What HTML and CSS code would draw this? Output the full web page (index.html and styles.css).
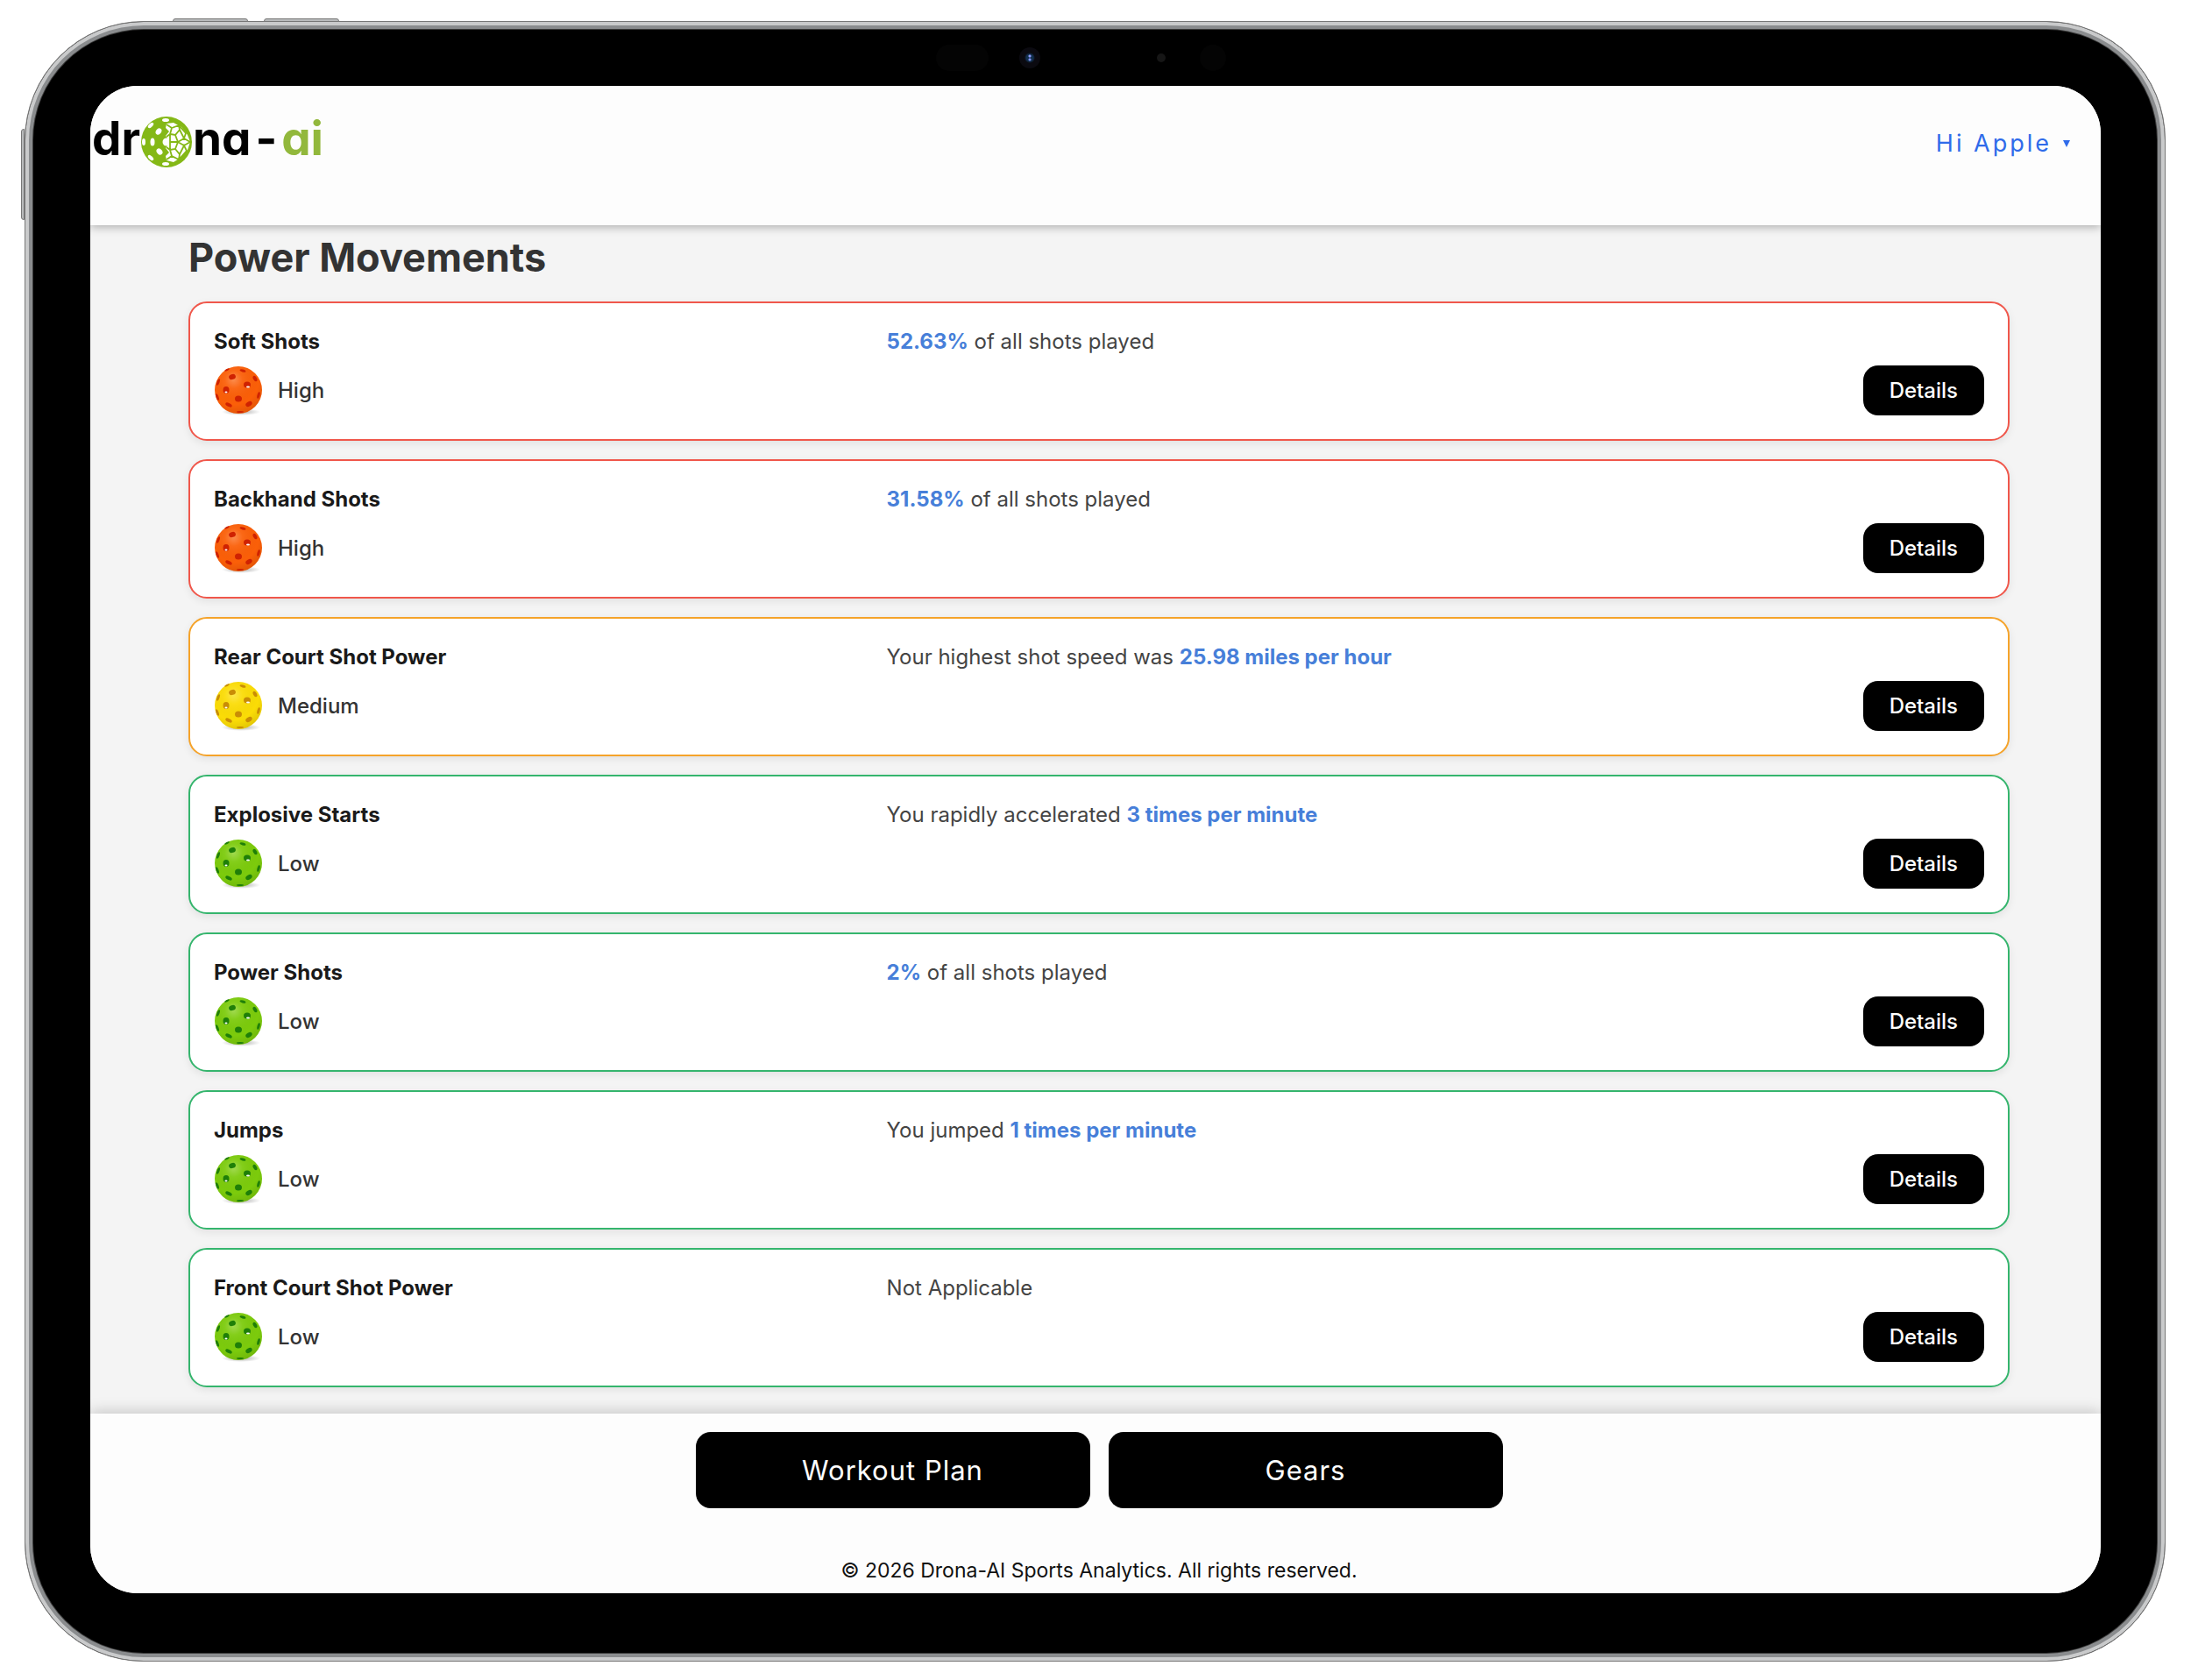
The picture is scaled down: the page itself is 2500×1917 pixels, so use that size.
FILE: index.html
```html
<!DOCTYPE html>
<html lang="en">
<head>
    <meta charset="UTF-8">
    <meta name="viewport" content="width=device-width, initial-scale=1.0">
    <title>Drona-AI | Power Movements</title>
    <link rel="stylesheet" href="styles.css">
</head>
<body>
    <!-- Shared ball drawing, coloured by the level class of each card -->
    <svg class="sprite" aria-hidden="true">
        <defs>
            <radialGradient id="shine" cx="0.4" cy="0.28" r="0.75">
                <stop offset="0" stop-color="#fff" stop-opacity="0.28"/>
                <stop offset="0.25" stop-color="#fff" stop-opacity="0.06"/>
                <stop offset="0.7" stop-color="#000" stop-opacity="0"/>
                <stop offset="1" stop-color="#000" stop-opacity="0.1"/>
            </radialGradient>
            <radialGradient id="ground">
                <stop offset="0" stop-color="#777" stop-opacity="0.6"/>
                <stop offset="1" stop-color="#777" stop-opacity="0"/>
            </radialGradient>
            <symbol id="ball" viewBox="0 0 56 56">
                <ellipse cx="31" cy="52" rx="22" ry="4" fill="url(#ground)"/>
                <circle class="ball-body" cx="28" cy="27" r="27"/>
                <circle cx="28" cy="27" r="27" fill="url(#shine)"/>
                <g class="ball-holes">
                    <ellipse cx="21" cy="12" rx="4" ry="3" transform="rotate(-20 21 12)"/>
                    <ellipse cx="33" cy="5" rx="3.5" ry="1.5" transform="rotate(15 33 5)"/>
                    <ellipse cx="15" cy="4" rx="3" ry="1" transform="rotate(-25 15 4)"/>
                    <ellipse cx="47" cy="14" rx="2" ry="3.5" transform="rotate(-30 47 14)"/>
                    <ellipse cx="38" cy="21" rx="4" ry="3.5"/>
                    <ellipse cx="14" cy="27" rx="3.5" ry="4"/>
                    <ellipse cx="5" cy="18" rx="1.5" ry="4" transform="rotate(20 5 18)"/>
                    <ellipse cx="28" cy="37" rx="4" ry="3.5"/>
                    <ellipse cx="4" cy="35" rx="1.5" ry="4" transform="rotate(-20 4 35)"/>
                    <ellipse cx="17" cy="44" rx="4" ry="2" transform="rotate(25 17 44)"/>
                    <ellipse cx="40" cy="43" rx="4" ry="2.5" transform="rotate(-30 40 43)"/>
                    <ellipse cx="51" cy="33" rx="1.5" ry="4" transform="rotate(15 51 33)"/>
                    <ellipse cx="30" cy="52" rx="4" ry="1"/>
                </g>
                <g fill="#fff">
                    <ellipse cx="39" cy="23.5" rx="2" ry="1"/>
                    <ellipse cx="14" cy="29.5" rx="1.5" ry="1"/>
                </g>
            </symbol>
        </defs>
    </svg>

    <div class="tablet">
        <span class="side-button volume-up"></span>
        <span class="side-button volume-down"></span>
        <span class="side-button power"></span>
        <div class="sensors">
            <span class="sensor-pill"></span>
            <span class="camera"></span>
            <span class="mic"></span>
            <span class="sensor-dot"></span>
        </div>

        <div class="screen">
            <header class="header">
                <a class="logo" href="#" aria-label="drona-ai">
                    <span>dr</span>
                    <svg class="logo-ball" viewBox="0 0 60 60" aria-hidden="true">
                        <circle cx="30" cy="30" r="29" fill="#84b816"/>
                        <g fill="#fff">
                            <ellipse cx="29" cy="5" rx="4" ry="2"/>
                            <ellipse cx="12" cy="11" rx="4" ry="2" transform="rotate(-45 12 11)"/>
                            <ellipse cx="21" cy="18" rx="4" ry="3" transform="rotate(-55 21 18)"/>
                            <ellipse cx="4" cy="30" rx="2" ry="4"/>
                            <ellipse cx="14" cy="30" rx="2.5" ry="4.5"/>
                            <ellipse cx="22" cy="41" rx="4" ry="3" transform="rotate(50 22 41)"/>
                            <ellipse cx="12" cy="48" rx="4" ry="2" transform="rotate(45 12 48)"/>
                            <ellipse cx="29" cy="55" rx="4" ry="2"/>
                            <circle cx="30" cy="30" r="4.5"/>
                            <path d="M30 9 38 8 47 13 54 22 57 30 54 39 46 48 38 53 30 51 29 46 33 42 29 37 34 30 29 23 33 18 29 14Z"/>
                        </g>
                        <path d="M30 10 36 14 44 11M36 14 34 21 40 22 45 16 44 11 52 20 50 26 45 16M34 21 30 24M40 22 43 30 50 26 57 30 50 34 43 30 40 38 34 39 30 36M34 30 43 30M40 38 45 44 50 34 53 40 44 50 45 44M34 39 36 46 44 50M36 46 30 50M34 21 34 39" fill="none" stroke="#84b816" stroke-width="1.8"/>
                    </svg>
                    <span>na</span>
                    <span class="logo-dash">-</span>
                    <span class="logo-ai">ai</span>
                </a>
                <button class="user-menu" type="button">Hi Apple <span class="caret"></span></button>
            </header>

            <main class="content">
                <h1>Power Movements</h1>

                <section class="card high">
                    <h2>Soft Shots</h2>
                    <p class="summary"><strong>52.63%</strong> of all shots played</p>
                    <div class="level"><svg class="ball"><use href="#ball"/></svg>High</div>
                    <button class="details" type="button">Details</button>
                </section>

                <section class="card high">
                    <h2>Backhand Shots</h2>
                    <p class="summary"><strong>31.58%</strong> of all shots played</p>
                    <div class="level"><svg class="ball"><use href="#ball"/></svg>High</div>
                    <button class="details" type="button">Details</button>
                </section>

                <section class="card medium">
                    <h2>Rear Court Shot Power</h2>
                    <p class="summary">Your highest shot speed was <strong>25.98 miles per hour</strong></p>
                    <div class="level"><svg class="ball"><use href="#ball"/></svg>Medium</div>
                    <button class="details" type="button">Details</button>
                </section>

                <section class="card low">
                    <h2>Explosive Starts</h2>
                    <p class="summary">You rapidly accelerated <strong>3 times per minute</strong></p>
                    <div class="level"><svg class="ball"><use href="#ball"/></svg>Low</div>
                    <button class="details" type="button">Details</button>
                </section>

                <section class="card low">
                    <h2>Power Shots</h2>
                    <p class="summary"><strong>2%</strong> of all shots played</p>
                    <div class="level"><svg class="ball"><use href="#ball"/></svg>Low</div>
                    <button class="details" type="button">Details</button>
                </section>

                <section class="card low">
                    <h2>Jumps</h2>
                    <p class="summary">You jumped <strong>1 times per minute</strong></p>
                    <div class="level"><svg class="ball"><use href="#ball"/></svg>Low</div>
                    <button class="details" type="button">Details</button>
                </section>

                <section class="card low">
                    <h2>Front Court Shot Power</h2>
                    <p class="summary">Not Applicable</p>
                    <div class="level"><svg class="ball"><use href="#ball"/></svg>Low</div>
                    <button class="details" type="button">Details</button>
                </section>
            </main>

            <footer class="footer">
                <nav class="actions">
                    <button type="button">Workout Plan</button>
                    <button type="button">Gears</button>
                </nav>
                <p class="copyright">© 2026 Drona-AI Sports Analytics. All rights reserved.</p>
            </footer>
        </div>
    </div>
</body>
</html>
```
FILE: styles.css
```css
* {
    box-sizing: border-box;
}
body {
    margin: 0;
    padding: 24px 29px 20px 28px;
    background-color: #fff;
    font-family: Inter, "Liberation Sans", sans-serif;
    font-size: 24px;
    line-height: 32px;
    color: #333;
}
h1, h2, p {
    margin: 0;
}
button {
    font-family: inherit;
    border: none;
    cursor: pointer;
}
.sprite {
    position: absolute;
    width: 0;
    height: 0;
}

/* Tablet frame */
.tablet {
    position: relative;
    padding: 73px 73px 77px 74px;
    border: 1px solid #777;
    border-radius: 136px;
    background-color: #000;
    box-shadow: inset 0 0 0 4px #c9cacb, inset 0 0 0 8px #8a8c8e, inset 0 0 0 9px #3c3c3c;
}
.side-button {
    position: absolute;
    background-color: #b9bbbc;
    border: 1px solid #777;
}
.volume-up, .volume-down {
    top: -4px;
    width: 86px;
    height: 4px;
    border-radius: 3px 3px 0 0;
}
.volume-up {
    left: 168px;
}
.volume-down {
    left: 272px;
}
.power {
    top: 122px;
    left: -5px;
    width: 4px;
    height: 104px;
    border-radius: 3px 0 0 3px;
}
.sensors span {
    position: absolute;
    border-radius: 50px;
    background-color: #040404;
}
.sensors .sensor-pill {
    top: 26px;
    left: 1039px;
    width: 60px;
    height: 30px;
}
.sensors .camera {
    top: 29px;
    left: 1134px;
    width: 24px;
    height: 24px;
    background:
        radial-gradient(circle at 12px 10px, #8f9cff 1px, transparent 2px),
        radial-gradient(circle at 12px 14px, #7f8ff0 1px, transparent 2px),
        radial-gradient(circle, #12304e 4px, #0b0a10 6px);
}
.sensors .mic {
    top: 36px;
    left: 1291px;
    width: 10px;
    height: 10px;
    background-color: #161616;
}
.sensors .sensor-dot {
    top: 26px;
    left: 1340px;
    width: 30px;
    height: 30px;
}
.screen {
    overflow: hidden;
    border-radius: 54px;
    background-color: #f4f4f4;
}

/* Header */
.header {
    position: relative;
    display: flex;
    justify-content: space-between;
    align-items: flex-start;
    height: 159px;
    padding: 28px 35px 0 2px;
    background-color: #fdfdfd;
    box-shadow: 0 2px 10px rgba(0, 0, 0, 0.3);
}
.logo {
    display: flex;
    align-items: center;
    height: 64px;
    font-size: 53px;
    font-weight: 700;
    line-height: 64px;
    font-feature-settings: "cv11";
    color: #000;
    text-decoration: none;
}
.logo-ball {
    width: 60px;
    height: 60px;
    margin-top: 8px;
}
.logo-dash {
    margin: 0 5px;
}
.logo-ai {
    color: #92b83c;
}
.user-menu {
    display: flex;
    align-items: center;
    gap: 13px;
    margin-top: 20px;
    padding: 0;
    background: none;
    font-size: 27px;
    line-height: 36px;
    letter-spacing: 3px;
    color: #2f6bea;
}
.caret {
    border-left: 4px solid transparent;
    border-right: 4px solid transparent;
    border-top: 8px solid #2f6bea;
}

/* Cards */
.content {
    display: flex;
    flex-direction: column;
    gap: 21px;
    padding: 8px 104px 30px 112px;
}
h1 {
    font-size: 45px;
    font-weight: 700;
    line-height: 58px;
}
.card {
    display: grid;
    grid-template-columns: 38% 1fr auto;
    row-gap: 10px;
    height: 159px;
    padding: 27px;
    border: 2px solid;
    border-radius: 21px;
    background-color: #fff;
    box-shadow: 0 3px 10px rgba(0, 0, 0, 0.08);
}
.card h2 {
    font-size: 24px;
    font-weight: 700;
    line-height: 34px;
    color: #1a1a1a;
}
.summary {
    grid-column: 2 / 4;
    line-height: 34px;
    color: #444;
}
.summary strong {
    font-weight: 700;
    color: #477fd9;
}
.level {
    display: flex;
    align-items: center;
    gap: 17px;
    height: 57px;
    font-weight: 500;
    color: #333;
}
.ball {
    width: 56px;
    height: 56px;
}
.details {
    grid-column: 3;
    height: 57px;
    padding: 0 30px;
    border-radius: 17px;
    background-color: #000;
    font-size: 24px;
    font-weight: 500;
    color: #fff;
}
.high {
    border-color: #f0574b;
}
.high .ball {
    --body: #fb5f08;
    --hole: #cf2202;
}
.medium {
    border-color: #f5a32a;
}
.medium .ball {
    --body: #fbdc06;
    --hole: #c98d06;
}
.low {
    border-color: #35b56d;
}
.low .ball {
    --body: #7ccb0c;
    --hole: #1f7f08;
}
.ball-body {
    fill: var(--body);
}
.ball-holes {
    fill: var(--hole);
}

/* Footer */
.footer {
    position: relative;
    padding: 21px 0 10px 8px;
    background-color: #fdfdfd;
    box-shadow: 0 -2px 16px rgba(0, 0, 0, 0.2);
    text-align: center;
}
.actions {
    display: flex;
    justify-content: center;
    gap: 21px;
}
.actions button {
    width: 450px;
    height: 87px;
    border-radius: 17px;
    background-color: #000;
    font-size: 31px;
    font-weight: 400;
    letter-spacing: 1px;
    color: #fff;
}
.copyright {
    margin-top: 55px;
    font-size: 23px;
    color: #111;
}
```
